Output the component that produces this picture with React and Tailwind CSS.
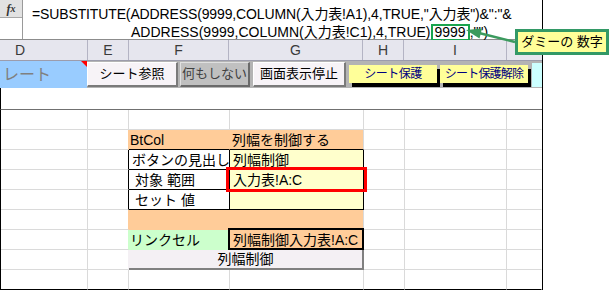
import React from "react";

const Cell = ({ b = "border-b-[#dadada]", r = "border-r-[#dadada]", className = "", children }) => (
  <div className={`h-[20px] border-b border-r ${b} ${r} ${className} flex items-end leading-[18px] whitespace-nowrap overflow-visible`}>
    {children}
  </div>
);

const Empty = ({ last }) => (
  <>
    <Cell b={last ? "border-b-black" : "border-b-[#dadada]"} />
    <Cell b={last ? "border-b-black" : "border-b-[#dadada]"} />
    <Cell b={last ? "border-b-black" : "border-b-[#dadada]"} />
    <Cell b={last ? "border-b-black" : "border-b-[#dadada]"} />
    <Cell b={last ? "border-b-black" : "border-b-[#dadada]"} />
    <Cell b={last ? "border-b-black" : "border-b-[#dadada]"} />
    <Cell r="border-r-transparent" b={last ? "border-b-black" : "border-b-[#dadada]"} />
  </>
);

const Tail = () => (
  <>
    <Cell />
    <Cell />
    <Cell r="border-r-transparent" />
  </>
);

export default function App() {
  return (
    <div className="relative w-[611px] h-[290px] bg-white overflow-hidden font-['Liberation_Sans','Noto_Sans_CJK_JP',sans-serif] text-black">
      <div className="w-[543px] h-[290px] border-r border-r-black flex flex-col">
        {/* formula bar */}
        <div className="flex h-[40px] border-b border-b-[#8c8c8c] shrink-0">
          <div className="w-[23px] border-r border-r-[#9a9a9a] flex flex-col shrink-0">
            <div className="h-[18px] bg-[#e2e2e2] border-b border-b-[#a8a8a8] flex items-center justify-center font-['Liberation_Serif',serif] italic font-bold text-[12px] text-[#333]">
              f<span className="text-[10px]">x</span>
            </div>
          </div>
          <div className="flex-1 text-[14px] leading-[19px] pt-[5px] pl-[9px] whitespace-nowrap">
            <div className="tracking-[-0.13px]">=SUBSTITUTE(ADDRESS(9999,COLUMN(入力表!A1),4,TRUE,"入力表")&amp;":"&amp;</div>
            <div className="pl-[99px] flex items-center h-[17px]">
              <span>ADDRESS(9999,COLUMN(入力表!C1),4,TRUE)</span>
              <span className="border-2 border-[#1aa44e] px-[2px] h-[17px] leading-[13px]">9999</span>
              <span>,"")</span>
            </div>
          </div>
        </div>

        {/* column header */}
        <div className="grid grid-cols-[88px_41px_100px_134px_41px_103px_35px] h-[21px] bg-[#e6e6ee] border-b border-b-[#9c9cac] text-[14px] text-[#3a3a3a] shrink-0">
          <div className="border-r border-r-[#b4b4c4] pl-[15px] leading-[20px]">D</div>
          <div className="border-r border-r-[#b4b4c4] text-center leading-[20px]">E</div>
          <div className="border-r border-r-[#b4b4c4] text-center leading-[20px]">F</div>
          <div className="border-r border-r-[#b4b4c4] text-center leading-[20px]">G</div>
          <div className="border-r border-r-[#b4b4c4] text-center leading-[20px]">H</div>
          <div className="border-r border-r-[#b4b4c4] text-center leading-[20px]">I</div>
          <div></div>
        </div>

        {/* button row */}
        <div className="flex h-[27px] bg-[#b4b4b4] shrink-0">
          <div className="relative w-[87px] h-full bg-[#99ccff] text-[#808080] text-[16px] pl-[3px] leading-[27px]">
            レート
            <div className="absolute top-0 right-0 w-0 h-0 border-l-[6px] border-l-transparent border-t-[6px] border-t-[#ff0000]"></div>
          </div>
          <div className="w-[91px] h-[25px] mt-[1px] bg-[#f7f3f7] border-t border-l border-t-white border-l-white border-b-2 border-r-2 border-b-[#7a7a7a] border-r-[#7a7a7a] text-[13px] flex items-center justify-center">
            シート参照
          </div>
          <div className="ml-[2px] w-[70px] h-[25px] mt-[1px] bg-[#c0c0c0] border-t border-l border-t-[#e0e0e0] border-l-[#e0e0e0] border-b-2 border-r-2 border-b-[#6a6a6a] border-r-[#6a6a6a] text-[13px] text-[#404040] flex items-center justify-center">
            何もしない
          </div>
          <div className="ml-[3px] w-[93px] h-[25px] mt-[1px] bg-[#f7f3f7] border-t border-l border-t-white border-l-white border-b-2 border-r-2 border-b-[#7a7a7a] border-r-[#7a7a7a] text-[13px] flex items-center justify-center">
            画面表示停止
          </div>
          <div className="ml-[3px] w-[88px] h-[18px] mt-[4px] bg-[#ffff99] shadow-[3px_4px_0_#000] text-[12px] text-[#000080] flex items-center justify-center tracking-[-0.5px]">
            シート保護
          </div>
          <div className="ml-[3px] w-[88px] h-[18px] mt-[4px] bg-[#ffff99] shadow-[3px_4px_0_#000] text-[12px] text-[#000080] flex items-center justify-center tracking-[-0.8px]">
            シート保護解除
          </div>
          <div className="ml-[4px] w-[10px] h-[24px] mt-[2px] bg-[#ccffff]"></div>
        </div>

        {/* spacer */}
        <div className="h-[22px] border-l border-l-black border-b border-b-[#707070] shrink-0"></div>

        {/* grid body */}
        <div className="grid grid-cols-[87px_41px_101px_134px_41px_102px_35px] border-l border-l-black text-[14px]">
          {/* row 1 */}
          <Empty />
          {/* row 2 */}
          <Cell />
          <Cell r="border-r-[#ffcc99]" />
          <Cell className="bg-[#ffcc99] pl-[1px]" r="border-r-[#ffcc99]" b="border-b-black">BtCol</Cell>
          <Cell className="bg-[#ffcc99] pl-[2px]" r="border-r-[#dadada]" b="border-b-black">列幅を制御する</Cell>
          <Tail />
          {/* row 3 */}
          <Cell />
          <Cell r="border-r-black" />
          <Cell className="pl-[3px]" r="border-r-black" b="border-b-black">ボタンの見出し</Cell>
          <Cell className="bg-[#ffffcc] pl-[3px]" r="border-r-black" b="border-b-black">列幅制御</Cell>
          <Tail />
          {/* row 4 */}
          <Cell />
          <Cell r="border-r-black" />
          <Cell className="pl-[6px]" r="border-r-black" b="border-b-black">対象 範囲</Cell>
          <Cell className="relative bg-[#ffffcc] pl-[3px]" r="border-r-black" b="border-b-black">
            入力表!A:C
            <div className="absolute left-[-4px] right-[-4px] top-[-3px] bottom-[-3px] border-[3px] border-[#ff0000]"></div>
          </Cell>
          <Tail />
          {/* row 5 */}
          <Cell />
          <Cell r="border-r-black" />
          <Cell className="pl-[6px]" r="border-r-black" b="border-b-black">セット 値</Cell>
          <Cell className="bg-[#ffffcc]" r="border-r-black" b="border-b-black" />
          <Tail />
          {/* row 6 */}
          <Cell />
          <Cell r="border-r-[#ffcc99]" />
          <Cell className="bg-[#ffcc99]" r="border-r-[#ffcc99]" b="border-b-[#ffcc99]" />
          <Cell className="bg-[#ffcc99]" r="border-r-[#dadada]" b="border-b-[#dadada]" />
          <Tail />
          {/* row 7 */}
          <Cell />
          <Cell r="border-r-[#ccffcc]" />
          <Cell className="bg-[#ccffcc] pl-[1px]" r="border-r-[#ccffcc]" b="border-b-[#ccffcc]">リンクセル</Cell>
          <Cell className="relative bg-[#ffcc99] pl-[3px]" r="border-r-[#dadada]" b="border-b-[#dadada]">
            列幅制御入力表!A:C
            <div className="absolute left-[-2px] right-[-1px] top-[-2px] bottom-[-1px] border-2 border-black"></div>
          </Cell>
          <Tail />
          {/* row 8 */}
          <Cell />
          <Cell r="border-r-[#f4f0f4]" />
          <div className="col-span-2 h-[20px] bg-[#f4f0f4] border-b-2 border-r-2 border-b-[#808080] border-r-[#808080] flex items-center justify-center text-[14px] leading-[18px]">
            列幅制御
          </div>
          <Tail />
          {/* row 9 */}
          <Empty last />
        </div>
      </div>

      {/* arrow */}
      <svg className="absolute left-0 top-0 pointer-events-none" width="611" height="100">
        <line x1="515" y1="42" x2="479" y2="33" stroke="#3b9a5e" strokeWidth="2.5" />
        <polygon points="466,30 482,28.5 479.5,38.5" fill="#3b9a5e" />
      </svg>

      {/* callout */}
      <div className="absolute left-[515px] top-[29px] w-[94px] h-[26px] border-[3px] border-[#339966] bg-[#ffff99] text-[13px] flex items-center justify-center whitespace-nowrap">
        ダミーの 数字
      </div>
    </div>
  );
}
